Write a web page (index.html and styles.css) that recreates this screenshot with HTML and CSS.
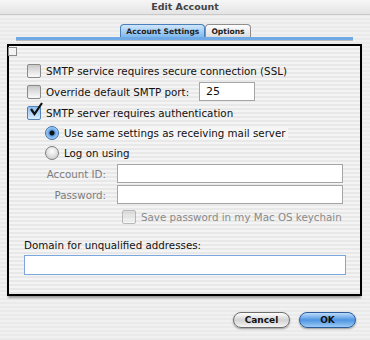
FILE: index.html
```html
<!DOCTYPE html>
<html lang="en">
<head>
    <meta charset="UTF-8">
    <title>Edit Account</title>
    <link rel="stylesheet" href="styles.css">
</head>
<body>
<div class="window">
    <div class="titlebar">Edit Account</div>

    <div class="tabs">
        <span class="tab tab-active">Account Settings</span>
        <span class="tab">Options</span>
    </div>
    <div class="tab-line"></div>

    <div class="pane">
        <span class="handle"></span>

        <div class="row">
            <span class="check"></span>
            <span>SMTP service requires secure connection (SSL)</span>
        </div>
        <div class="row">
            <span class="check"></span>
            <span>Override default SMTP port:</span>
            <span class="field port">25</span>
        </div>
        <div class="row">
            <span class="check checked">
                <svg width="16" height="16" viewBox="0 0 16 16"><path d="M3 7 L6.5 12 L14 1" fill="none" stroke="#111" stroke-width="2.2"/></svg>
            </span>
            <span>SMTP server requires authentication</span>
        </div>
        <div class="row sub">
            <span class="radio on"></span>
            <span class="hl">Use same settings as receiving mail server</span>
        </div>
        <div class="row sub">
            <span class="radio"></span>
            <span>Log on using</span>
        </div>
        <div class="row field-row">
            <span class="label">Account ID:</span>
            <span class="field wide"></span>
        </div>
        <div class="row field-row">
            <span class="label">Password:</span>
            <span class="field wide"></span>
        </div>
        <div class="row keychain">
            <span class="check dim"></span>
            <span class="disabled">Save password in my Mac OS keychain</span>
        </div>

        <div class="domain-label">Domain for unqualified addresses:</div>
        <div class="field domain"></div>
    </div>

    <div class="buttons">
        <span class="btn">Cancel</span>
        <span class="btn btn-ok">OK</span>
    </div>
</div>
</body>
</html>
```

FILE: styles.css
```css
body{
    margin: 0;
    font-family: "DejaVu Sans", sans-serif;
    font-size: 10.3px;
    color: #111;
}

.window{
    width: 370px;
    height: 340px;
    background: repeating-linear-gradient(#f1f1f1 0 2px, #eaeaea 2px 4px);
    overflow: hidden;
}

.titlebar{
    height: 14px;
    line-height: 14px;
    text-align: center;
    font-size: 9.5px;
    font-weight: bold;
    color: #444;
    background: linear-gradient(#f6f6f6, #e4e4e4);
    border-bottom: 1px solid #c8c8c8;
}

/* -------------------------- TABS -------------------------- */
.tabs{
    display: flex;
    justify-content: center;
    padding-top: 9px;
    padding-left: 1px;
    height: 13px;
}

.tab{
    font-size: 7.6px;
    font-weight: bold;
    line-height: 13px;
    padding: 0 5px;
    border: 1px solid #8e8e8e;
    border-bottom: none;
    border-radius: 4px 4px 0 0;
    background: linear-gradient(#fdfdfd, #dedede);
    color: #222;
}
.tab-active{
    background: linear-gradient(#cfe6fb, #7fb9ee);
    border-color: #4b7fb8;
}

.tab-line{
    height: 3px;
    margin: 0 17px 0 16px;
    background: #6fa9e6;
    border-bottom: 1px solid #b9b9b9;
}

/* -------------------------- PANE -------------------------- */
.pane{
    position: relative;
    margin: 3px 8px 0 7px;
    height: 234px;
    padding: 14px 0 0 18px;
    border: 2px solid #000;
    background: repeating-linear-gradient(#f4f4f4 0 2px, #e8e8e8 2px 4px);
    box-shadow: 0 3px 2px -1px #9a9a9a;
}

.handle{
    position: absolute;
    left: -1px;
    top: 1px;
    width: 7px;
    height: 7px;
    border: 1px solid #8a8a8a;
    background: #f4f4f4;
}

.row{
    display: flex;
    align-items: center;
    height: 21px;
    gap: 5px;
}
.row.sub{
    padding-left: 18px;
    height: 20px;
}

.check{
    width: 12px;
    height: 12px;
    border: 1px solid #8a8a8a;
    border-radius: 2px;
    background: linear-gradient(#c9c9c9, #fafafa);
    position: relative;
    flex: none;
}
.check.checked{
    background: linear-gradient(#8dbdf0, #d9ecfd);
    border-color: #5583b6;
}
.check svg{
    position: absolute;
    left: 0;
    top: -5px;
}
.check.dim{
    opacity: 0.55;
}

.radio{
    width: 12px;
    height: 12px;
    border: 1px solid #808080;
    border-radius: 50%;
    background: radial-gradient(circle at 50% 35%, #fefefe, #c4c4c4);
    flex: none;
}
.radio.on{
    background: radial-gradient(circle, #111 0 2px, #5c9ee6 3px, #a8d0f7 6px);
    border-color: #3c6fa8;
}

.hl{
    background: #f5f5f5;
    padding-right: 2px;
}

.field{
    display: block;
    height: 17px;
    line-height: 17px;
    background: #fff;
    border: 1px solid #a5a5a5;
    box-sizing: border-box;
    padding-left: 6px;
    font-size: 11px;
}
.port{
    width: 56px;
    margin-left: 5px;
    height: 19px;
}

.field-row{
    gap: 11px;
}
.label{
    width: 79px;
    text-align: right;
    color: #7d7d7d;
}
.wide{
    width: 226px;
    height: 19px;
}

.keychain{
    padding-left: 95px;
    height: 24px;
}
.disabled{
    color: #8a8a8a;
}

.domain-label{
    margin-top: 10px;
    margin-left: -3px;
}
.domain{
    margin: 4px 0 0 -3px;
    width: 322px;
    height: 20px;
    border: 1px solid #7aa7dc;
}

/* -------------------------- BUTTONS -------------------------- */
.buttons{
    display: flex;
    justify-content: flex-end;
    gap: 9px;
    padding: 16px 14px 0 0;
}

.btn{
    width: 55px;
    height: 14px;
    line-height: 14px;
    text-align: center;
    font-size: 9px;
    font-weight: bold;
    border-radius: 8px;
    border: 1px solid #6d6d6d;
    background: linear-gradient(#ffffff, #d2d2d2 50%, #f4f4f4);
    box-shadow: 0 1px 2px #999;
}
.btn-ok{
    border-color: #2a5b9c;
    background: linear-gradient(#bfdcfa, #4f95e2 50%, #9ccaf5);
}
```
